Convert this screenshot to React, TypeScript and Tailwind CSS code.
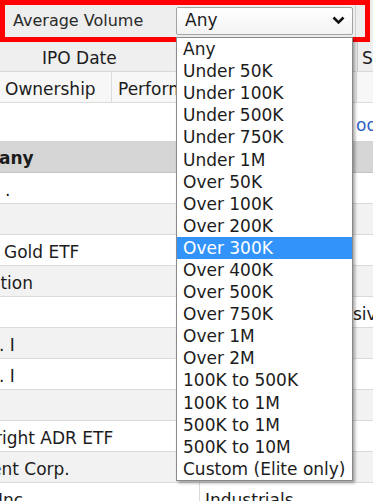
import React from 'react'

const volumeOptions = [
  'Any',
  'Under 50K',
  'Under 100K',
  'Under 500K',
  'Under 750K',
  'Under 1M',
  'Over 50K',
  'Over 100K',
  'Over 200K',
  'Over 300K',
  'Over 400K',
  'Over 500K',
  'Over 750K',
  'Over 1M',
  'Over 2M',
  '100K to 500K',
  '100K to 1M',
  '500K to 1M',
  '500K to 10M',
  'Custom (Elite only)'
]

interface Row {
  company: string
  offset: string
  sector?: string
  extra?: string
}

const rows: Row[] = [
  { company: '.', offset: 'ml-[5px]' },
  { company: '', offset: '' },
  { company: 'Gold ETF', offset: 'ml-[4px]' },
  { company: 'ation', offset: 'ml-[-10px]' },
  { company: '', offset: '', extra: 'sive' },
  { company: '. I', offset: 'ml-[-1px]' },
  { company: '. I', offset: 'ml-[-1px]' },
  { company: '', offset: '' },
  { company: 'right ADR ETF', offset: 'ml-[-5px]' },
  { company: 'ent Corp.', offset: 'ml-[-9px]' },
  { company: 'Inc.', offset: 'ml-[-2px]', sector: 'Industrials' }
]

const Chevron = () => (
  <svg width="13" height="9" viewBox="0 0 13 9" fill="none">
    <path d="M1.5 1.5 L6.5 6.5 L11.5 1.5" stroke="#111" strokeWidth="2.6" />
  </svg>
)

export default function App() {
  const selected = 'Over 300K'

  return (
    <div className="relative w-[373px] h-[501px] overflow-hidden bg-white text-[#1c1c1c] font-['DejaVu_Sans',Verdana,sans-serif]">
      {/* filter band */}
      <div className="h-[42px] bg-[#eeeeee] flex items-center">
        <div className="w-[176px] pl-[13px] text-[16px] text-[#2a2a2a]">Average Volume</div>
        <div className="w-[177px] h-[28px] mt-[-1px] flex items-center justify-between pl-[8px] pr-[7px] border border-[#a3a3a3] rounded-[2px] bg-gradient-to-b from-white to-[#f3f3f3] text-[17px]">
          <span>Any</span>
          <Chevron />
        </div>
        <div className="h-full ml-[2px] border-l border-[#cfcfcf]" />
      </div>

      {/* IPO row */}
      <div className="h-[30px] flex bg-[#efefef] border-b border-[#d8d8d8] text-[17px] leading-[20px]">
        <div className="w-[357px] flex items-center pt-[2px]">
          <span className="ml-[42px]">IPO Date</span>
        </div>
        <div className="flex-1 flex items-center pt-[2px] pl-[4px] border-l border-[#c8c8c8]">S</div>
      </div>

      {/* tabs row */}
      <div className="h-[31px] flex bg-[#f7f7f7] border-b border-[#dcdcdc] text-[17px] leading-[20px]">
        <div className="w-[112px] flex items-center pt-[3px] pl-[5px] border-r border-[#dcdcdc]">Ownership</div>
        <div className="w-[245px] flex items-center pt-[3px] pl-[6px] overflow-hidden border-r border-[#dcdcdc]">Performance</div>
        <div className="flex-1" />
      </div>

      {/* link line */}
      <div className="h-[38px] flex items-end pb-[3px] pl-[356px] text-[17px] text-[#2d62c4]">oo</div>

      {/* table */}
      <div className="h-[32px] flex items-center pt-[2px] bg-[#d5d5d5] border-b border-[#c4c4c4] text-[17px] leading-[20px] font-bold overflow-hidden">
        <span className="ml-[-1px]">any</span>
      </div>
      {rows.map((row, i) => (
        <div
          key={i}
          className={`h-[31px] flex text-[17px] leading-[20px] border-b border-[#dadada] ${i % 2 === 0 ? 'bg-white' : 'bg-[#f2f2f2]'}`}
        >
          <div className="w-[200px] flex items-center pt-[4px] overflow-hidden whitespace-nowrap border-r border-[#dadada]">
            <span className={`shrink-0 ${row.offset}`}>{row.company}</span>
          </div>
          <div className="w-[150px] flex items-center pt-[4px] pl-[5px] whitespace-nowrap overflow-hidden">{row.sector}</div>
          <div className="flex-1 flex items-center pt-[4px] pl-[3px] whitespace-nowrap overflow-hidden">{row.extra}</div>
        </div>
      ))}

      {/* highlight annotation */}
      <div className="absolute left-0 top-0 w-[370px] h-[42px] border-[5px] border-[#ff0000] pointer-events-none" />

      {/* open dropdown */}
      <div className="absolute left-[176px] top-[37px] w-[177px] h-[444px] flex flex-col bg-white border border-[#8a8a8a] shadow-[2px_2px_3px_rgba(0,0,0,0.35)] text-[17px]">
        {volumeOptions.map((opt) => (
          <div
            key={opt}
            className={`flex-1 min-h-0 leading-[20px] flex items-center pl-[6px] whitespace-nowrap ${opt === selected ? 'bg-[#3294fa] text-white' : 'text-[#1c1c1c]'}`}
          >
            {opt}
          </div>
        ))}
      </div>
    </div>
  )
}
